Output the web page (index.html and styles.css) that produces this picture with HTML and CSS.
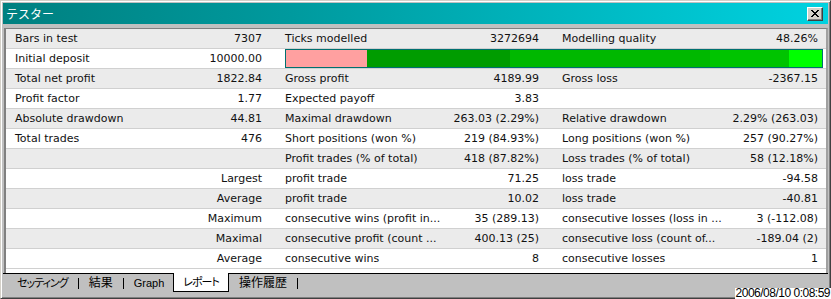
FILE: index.html
```html
<!DOCTYPE html>
<html lang="ja">
<head>
  <meta charset="UTF-8" />
  <title>テスター</title>
  <link rel="stylesheet" href="styles.css">
</head>
<body>
  <div class="window">
    <div class="titlebar">
      <span class="title">テスター</span>
      <button class="btn-close" aria-label="close">
        <svg width="8" height="7" viewBox="0 0 8 7"><path d="M0 0h2v1H0zM6 0h2v1H6zM1 1h2v1H1zM5 1h2v1H5zM2 2h4v1H2zM3 3h2v1H3zM2 4h4v1H2zM1 5h2v1H1zM5 5h2v1H5zM0 6h2v1H0zM6 6h2v1H6z" fill="#000"/></svg>
      </button>
    </div>

    <div class="report">
      <div class="row alt">
        <span class="lbl">Bars in test</span><span class="val">7307</span>
        <span class="lbl">Ticks modelled</span><span class="val">3272694</span>
        <span class="lbl">Modelling quality</span><span class="val">48.26%</span>
      </div>
      <div class="row">
        <span class="lbl">Initial deposit</span><span class="val">10000.00</span>
        <div class="quality">
          <div class="bar">
            <span class="seg seg-pink" style="width:81px"></span>
            <span class="seg seg-dark" style="width:143px"></span>
            <span class="seg seg-mid" style="width:200px"></span>
            <span class="seg seg-light" style="width:79px"></span>
            <span class="seg seg-bright" style="width:33px"></span>
          </div>
        </div>
      </div>
      <div class="row alt">
        <span class="lbl">Total net profit</span><span class="val">1822.84</span>
        <span class="lbl">Gross profit</span><span class="val">4189.99</span>
        <span class="lbl">Gross loss</span><span class="val">-2367.15</span>
      </div>
      <div class="row">
        <span class="lbl">Profit factor</span><span class="val">1.77</span>
        <span class="lbl">Expected payoff</span><span class="val">3.83</span>
        <span class="lbl"></span><span class="val"></span>
      </div>
      <div class="row alt">
        <span class="lbl">Absolute drawdown</span><span class="val">44.81</span>
        <span class="lbl">Maximal drawdown</span><span class="val">263.03 (2.29%)</span>
        <span class="lbl">Relative drawdown</span><span class="val">2.29% (263.03)</span>
      </div>
      <div class="row">
        <span class="lbl">Total trades</span><span class="val">476</span>
        <span class="lbl">Short positions (won %)</span><span class="val">219 (84.93%)</span>
        <span class="lbl">Long positions (won %)</span><span class="val">257 (90.27%)</span>
      </div>
      <div class="row alt">
        <span class="lbl"></span><span class="val"></span>
        <span class="lbl">Profit trades (% of total)</span><span class="val">418 (87.82%)</span>
        <span class="lbl">Loss trades (% of total)</span><span class="val">58 (12.18%)</span>
      </div>
      <div class="row">
        <span class="lbl"></span><span class="val">Largest</span>
        <span class="lbl">profit trade</span><span class="val">71.25</span>
        <span class="lbl">loss trade</span><span class="val">-94.58</span>
      </div>
      <div class="row alt">
        <span class="lbl"></span><span class="val">Average</span>
        <span class="lbl">profit trade</span><span class="val">10.02</span>
        <span class="lbl">loss trade</span><span class="val">-40.81</span>
      </div>
      <div class="row">
        <span class="lbl"></span><span class="val">Maximum</span>
        <span class="lbl">consecutive wins (profit in...</span><span class="val">35 (289.13)</span>
        <span class="lbl">consecutive losses (loss in ...</span><span class="val">3 (-112.08)</span>
      </div>
      <div class="row alt">
        <span class="lbl"></span><span class="val">Maximal</span>
        <span class="lbl">consecutive profit (count ...</span><span class="val">400.13 (25)</span>
        <span class="lbl">consecutive loss (count of...</span><span class="val">-189.04 (2)</span>
      </div>
      <div class="row">
        <span class="lbl"></span><span class="val">Average</span>
        <span class="lbl">consecutive wins</span><span class="val">8</span>
        <span class="lbl">consecutive losses</span><span class="val">1</span>
      </div>
    </div>

    <div class="tabs">
      <span class="tab kana first">セッティング</span>
      <span class="sep"></span>
      <span class="tab kanji">結果</span>
      <span class="sep"></span>
      <span class="tab">Graph</span>
      <span class="tab kana active">レポート</span>
      <span class="tab kanji">操作履歴</span>
      <span class="sep"></span>
    </div>
  </div>

  <div class="timestamp">2006/08/10 0:08:59</div>
</body>
</html>
```

FILE: styles.css
```css
* { box-sizing: border-box; margin: 0; padding: 0; }
body {
  position: relative;
  width: 831px;
  height: 299px;
  overflow: hidden;
  font-family: "DejaVu Sans", "Noto Sans CJK JP", sans-serif;
  font-size: 11px;
  color: #111;
  background: #c0c0c0;
}

.window {
  width: 831px;
  height: 299px;
  padding: 2px;
  border: 1px solid;
  border-color: #d4d0c8 #404040 #404040 #d4d0c8;
  box-shadow: inset 1px 1px #fff, inset -1px -1px #808080;
  background: #c0c0c0;
}

.titlebar {
  height: 21px;
  display: flex;
  align-items: center;
  justify-content: space-between;
  padding: 0 5px 0 3px;
  background: linear-gradient(90deg, #008080 0%, #009a9e 35%, #00d2e0 100%);
}
.title {
  color: #fff;
  font-family: "Noto Sans CJK JP", sans-serif;
  font-size: 12px;
  line-height: 21px;
}
.btn-close {
  width: 16px;
  height: 14px;
  display: flex;
  align-items: center;
  justify-content: center;
  background: #d4d0c8;
  border: 1px solid;
  border-color: #fff #404040 #404040 #fff;
  box-shadow: inset -1px -1px #808080;
}

.report {
  margin: 4px 0 0 1px;
  border-top: 1px solid #808080;
  border-left: 2px solid #808080;
  border-right: 2px solid #a0a0a0;
  background: #fff;
  padding-bottom: 4px;
}
.row {
  display: grid;
  grid-template-columns: 154px 116px 170px 107px 170px 103px;
  height: 20px;
  line-height: 19px;
  border-bottom: 1px solid #d0d0d0;
  background: #fff;
}
.row.alt {
  background: #ebebeb;
}
.lbl {
  padding-left: 9px;
  white-space: nowrap;
  overflow: hidden;
}
.val {
  padding-right: 14px;
  text-align: right;
  white-space: nowrap;
}
.row .val:last-child {
  padding-right: 8px;
}

.quality {
  grid-column: 3 / span 4;
  padding: 0 3px 0 9px;
}
.bar {
  display: flex;
  height: 19px;
  border: 1px solid #007070;
}
.seg { display: block; height: 100%; }
.seg-pink { background: #ffa0a0; }
.seg-dark { background: #009c00; }
.seg-mid { background: #00b800; }
.seg-light { background: #00c400; }
.seg-bright { background: #00ff00; flex: 1; }

.tabs {
  height: 20px;
  display: flex;
  align-items: stretch;
  padding-left: 14px;
  border-top: 1px solid #000;
  font-family: "Liberation Sans", "Noto Sans CJK JP", sans-serif;
  font-size: 11px;
  font-feature-settings: "palt";
}
.tab {
  padding: 0 10px;
  line-height: 18px;
  color: #000;
}
.tab.kana {
  letter-spacing: -1px;
}
.tab.kanji {
  font-size: 12px;
}
.tab.first {
  padding-left: 0;
}
.tab.active {
  margin-top: -1px;
  margin-left: -1px;
  height: 19px;
  line-height: 19px;
  padding: 0 9px;
  background: #fff;
  border: 1px solid #000;
  border-top: none;
}
.sep {
  width: 1px;
  height: 11px;
  align-self: center;
  background: #000;
}

.timestamp {
  position: absolute;
  right: 0;
  bottom: 0;
  height: 11px;
  padding: 0 1px;
  background: #fff;
  color: #000;
  font-family: "Liberation Sans", sans-serif;
  font-size: 12px;
  line-height: 11px;
  letter-spacing: -0.5px;
}
```
